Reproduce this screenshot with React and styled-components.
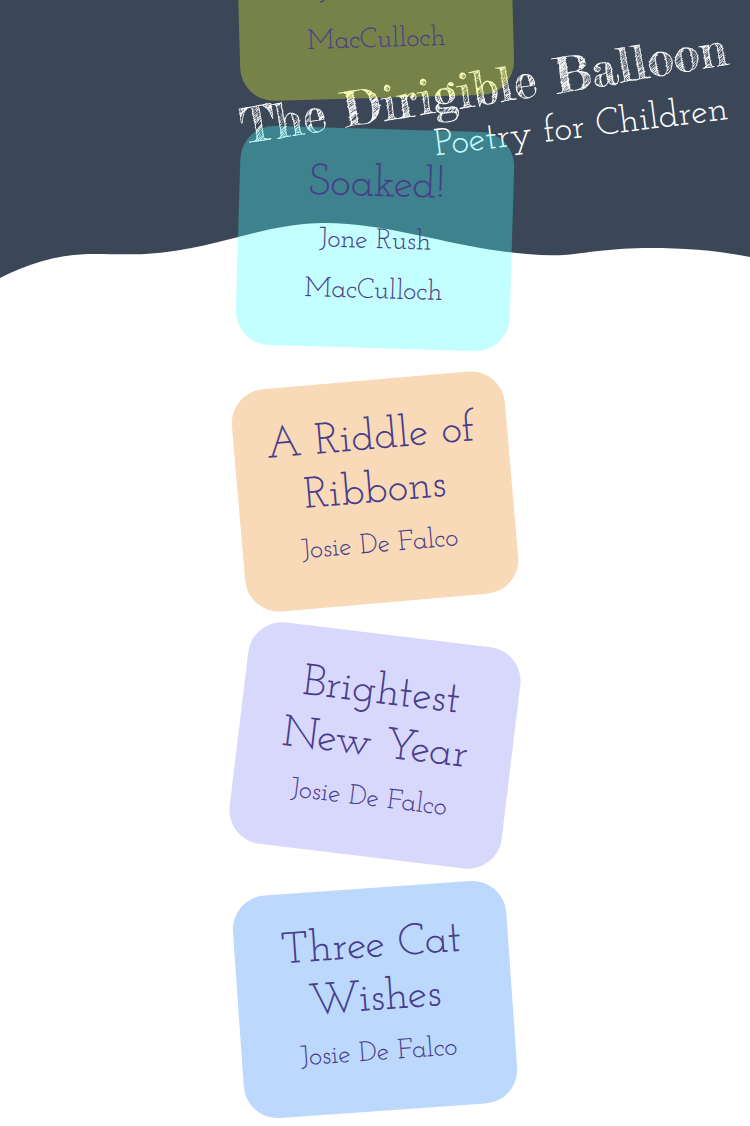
import React from "react";
import styled, { createGlobalStyle } from "styled-components";

const Global = createGlobalStyle`
  html, body { margin: 0; background: #fff; overflow: hidden; }
  * { box-sizing: border-box; }
`;

const slab = `"Josefin Slab", "Liberation Serif", serif`;

/* The banner and the scrolled poem stack share one grid cell, so the cards pass over the banner. */
const Page = styled.main`
  display: grid;
  grid-template: 1126px / 750px;
  overflow: hidden;
`;

const Banner = styled.header`
  grid-area: 1 / 1;
  display: grid;
  grid-template: 290px / 750px;
  align-content: start;
  color: #fff;
`;

const Wave = styled.svg`
  grid-area: 1 / 1;
  display: block;
`;

const Masthead = styled.div`
  grid-area: 1 / 1;
  display: flex;
  flex-direction: column;
  align-items: flex-end;
  gap: 9px;
  padding: 18px 20px 0 0;
`;

const SiteTitle = styled.h1`
  margin: 0;
  padding-right: 1px;
  font: 400 48px/60px "Fredericka the Great", "Liberation Serif", serif;
  white-space: nowrap;
  transform: rotate(-9.2deg);
  transform-origin: 100% 78%;
`;

const Tagline = styled.p`
  margin: 0;
  font: 400 37.8px/46px ${slab};
  white-space: nowrap;
  transform: rotate(-7.1deg);
  transform-origin: 100% 78%;
`;

const Stack = styled.section`
  grid-area: 1 / 1;
  display: flex;
  flex-direction: column;
  align-items: center;
  gap: 31.5px;
  margin-top: -122.5px;
`;

const Card = styled.article`
  flex: none;
  display: flex;
  flex-direction: column;
  align-items: center;
  gap: ${(p) => p.$gap}px;
  width: 274px;
  height: ${(p) => p.$height}px;
  padding-top: ${(p) => (p.$height - 159) / 2}px;
  border-radius: 34px;
  background: ${(p) => p.$fill};
  transform: rotate(${(p) => p.$tilt}deg);
  color: #483d8b;
  font-family: ${slab};
  text-align: center;
  white-space: nowrap;
`;

const Poem = styled.div`
  font-size: 44px;
  line-height: 53px;
`;

const Poet = styled.div`
  font-size: 28px;
  line-height: 50px;
`;

const poems = [
  { title: ["Raining"], poet: ["Jone Rush", "MacCulloch"], tilt: -1.6, height: 220, gap: 3, fill: "rgba(244,255,40,.32)" },
  { title: ["Soaked!"], poet: ["Jone Rush", "MacCulloch"], tilt: 1.7, height: 219, gap: 4, fill: "rgba(68,255,255,.32)" },
  { title: ["A Riddle of", "Ribbons"], poet: ["Josie De Falco"], tilt: -4.9, height: 222.5, gap: 2.5, fill: "#f8dab9" },
  { title: ["Brightest", "New Year"], poet: ["Josie De Falco"], tilt: 6.9, height: 222.5, gap: 2.5, fill: "#d8d8fc" },
  { title: ["Three Cat", "Wishes"], poet: ["Josie De Falco"], tilt: -4, height: 222.5, gap: 2.5, fill: "#bcd8fc" },
];

export default function App() {
  return (
    <Page>
      <Global />
      <Banner>
        <Wave width="750" height="290" viewBox="0 0 750 290">
          <path fill="#3b4757" d="M0 0H750V257C716 250 684 248 650 248C612 248 585 253 567 254.800C545 256.500 522 254 500 251C445 244 385 223 325 223C262 223 216 250 145 254C120 255 104 253.500 88 254C55 255 25 265 0 278Z" />
        </Wave>
        <Masthead>
          <SiteTitle>The Dirigible Balloon</SiteTitle>
          <Tagline>Poetry for Children</Tagline>
        </Masthead>
      </Banner>
      <Stack>
        {poems.map((p, i) => (
          <Card key={i} $tilt={p.tilt} $height={p.height} $gap={p.gap} $fill={p.fill}>
            <Poem>{p.title.map((t) => <div key={t}>{t}</div>)}</Poem>
            <Poet>{p.poet.map((t) => <div key={t}>{t}</div>)}</Poet>
          </Card>
        ))}
      </Stack>
    </Page>
  );
}
